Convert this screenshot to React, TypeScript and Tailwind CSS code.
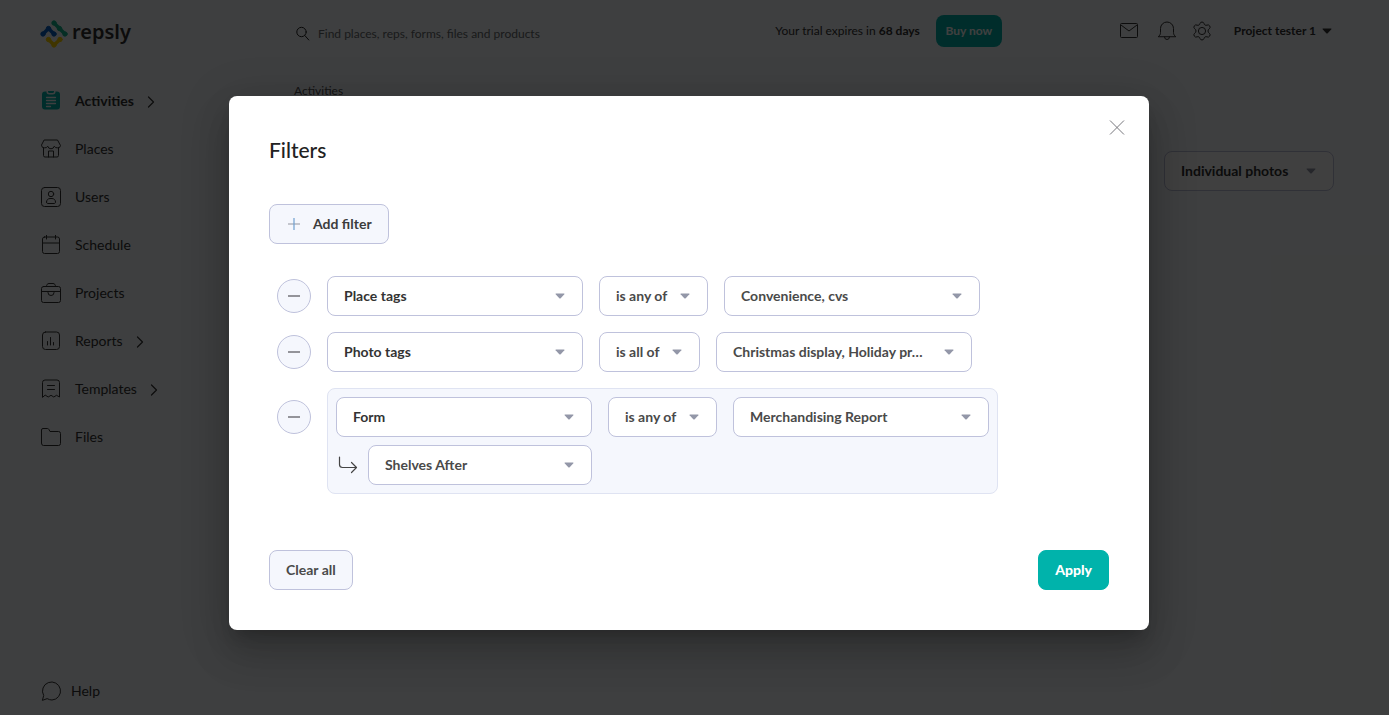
import type { ReactNode } from 'react';

interface NavEntry {
    label: string;
    icon: ReactNode;
    hasChildren?: boolean;
    active?: boolean;
}

/** Shared frame for the 20px line icons of the sidebar. */
function LineIcon({ children }: { children: ReactNode }) {
    return (
        <svg className="h-5 w-5 shrink-0" viewBox="0 0 20 20" fill="none" stroke="#333" strokeWidth="1" strokeLinecap="round" strokeLinejoin="round" aria-hidden="true">
            {children}
        </svg>
    );
}

const NAV_ENTRIES: NavEntry[] = [
    {
        label: 'Activities',
        active: true,
        hasChildren: true,
        icon: (
            <svg className="h-5 w-5 shrink-0" viewBox="0 0 20 20" fill="none" aria-hidden="true">
                <path d="M4 .5h1.500A2.800 2.800 0 008.300 3.500h3.400A2.800 2.800 0 0014.500.5H16a3 3 0 013 3v12a3 3 0 01-3 3H4a3 3 0 01-3-3v-12a3 3 0 013-3z" fill="#00b3ab" />
                <path d="M7 0h6v.5A1.500 1.500 0 0111.500 2h-3A1.500 1.500 0 017 .5z" fill="#00b3ab" />
                <path d="M5.500 6.500h9M5.500 9.500h9M5.500 12.500h9M5.500 15.500h4" stroke="#f7fafd" strokeWidth="1.300" strokeLinecap="round" />
            </svg>
        ),
    },
    {
        label: 'Places',
        icon: (
            <LineIcon>
                <path d="M3.500 1h13l3 5.500a2.600 2.600 0 01-3 2.300 3 3 0 01-3.200-1.600 3.400 3.400 0 01-6.600 0 3 3 0 01-3.200 1.600A2.600 2.600 0 01.5 6.500z" />
                <path d="M2.500 9v7.500A1.500 1.500 0 004 18h12a1.500 1.500 0 001.500-1.500V9M7.500 18v-6h5v6" />
            </LineIcon>
        ),
    },
    {
        label: 'Users',
        icon: (
            <LineIcon>
                <rect x=".5" y=".5" width="19" height="19" rx="3" />
                <circle cx="10" cy="7" r="2.700" />
                <path d="M5.500 15c0-2 1.500-3.500 3.500-3.500h2c2 0 3.500 1.500 3.500 3.500 0 1-.5 1.500-1.500 1.500H7c-1 0-1.500-.5-1.500-1.500z" />
            </LineIcon>
        ),
    },
    {
        label: 'Schedule',
        icon: (
            <LineIcon>
                <path d="M3.500 2h13a2 2 0 012 2v12.500a2 2 0 01-2 2h-13a2 2 0 01-2-2V4a2 2 0 012-2zM1.500 8h17M5.500 0v4M14.500 0v4" />
            </LineIcon>
        ),
    },
    {
        label: 'Projects',
        icon: (
            <LineIcon>
                <path d="M2.500 3.500h15a2 2 0 012 2v12a2 2 0 01-2 2h-15a2 2 0 01-2-2v-12a2 2 0 012-2zM.5 8.500h19M5.500 3.500c0-2 1-3 2.500-3h4c1.500 0 2.500 1 2.500 3M7 8.500v1a3 3 0 006 0v-1" />
            </LineIcon>
        ),
    },
    {
        label: 'Reports',
        hasChildren: true,
        icon: (
            <LineIcon>
                <rect x="1.500" y="1" width="17" height="17.500" rx="3" />
                <path d="M6.500 14v-3.500M9.500 14V6.500M12.500 14v-2.500" />
            </LineIcon>
        ),
    },
    {
        label: 'Templates',
        hasChildren: true,
        icon: (
            <LineIcon>
                <path d="M1.500 18V3.500A2.500 2.500 0 014 1h12a2.500 2.500 0 012.500 2.500V18l-3-1.700-2.700 1.700-2.800-1.700L7.200 18l-2.700-1.700zM6.500 6.500h7M6.500 10.500h7" />
            </LineIcon>
        ),
    },
    {
        label: 'Files',
        icon: (
            <LineIcon>
                <path d="M.5 16V3A1.500 1.500 0 012 1.500h4.500a1.500 1.500 0 011.300.8L9 4.500h8.500a2 2 0 012 2v10a2 2 0 01-2 2h-15a2 2 0 01-2-2z" />
            </LineIcon>
        ),
    },
];

function Logo() {
    return (
        <a href="#home" className="flex items-center gap-1">
            <svg className="h-7 w-7" viewBox="0 0 28 28" fill="none" strokeLinecap="round" strokeLinejoin="round" aria-hidden="true">
                <g stroke="#17b890" fill="#17b890">
                    <path d="M14 3l11 11" strokeWidth="3.500" />
                    <circle cx="14" cy="3" r="2.200" />
                    <circle cx="19.500" cy="8.500" r="2.200" />
                    <circle cx="25" cy="14" r="2.200" />
                </g>
                <g stroke="#0862c8">
                    <path d="M3 14l5.500-5.500L14 14" strokeWidth="3.500" />
                    <g fill="#0862c8">
                        <circle cx="3" cy="14" r="2.200" />
                        <circle cx="8.500" cy="8.500" r="2.200" />
                        <circle cx="14" cy="14" r="2.200" />
                    </g>
                </g>
                <g stroke="#ffd400">
                    <path d="M8.500 19.500l5.500 5.500 6-5.500" strokeWidth="3.500" />
                    <g fill="#ffd400">
                        <circle cx="8.500" cy="19.500" r="2.200" />
                        <circle cx="14" cy="25" r="2.200" />
                        <circle cx="20" cy="19.500" r="2.200" />
                    </g>
                </g>
            </svg>
            <span className="pb-1 font-['Noto_Sans',sans-serif] text-xl leading-6 font-semibold text-[#333]">repsly</span>
        </a>
    );
}

function Chevron() {
    return (
        <svg className="h-3 w-2" viewBox="0 0 8 12" fill="none" stroke="#333" strokeWidth="1.200" strokeLinecap="round" strokeLinejoin="round" aria-hidden="true">
            <path d="M1.500 1l5 5-5 5" />
        </svg>
    );
}

function Caret({ className }: { className: string }) {
    return (
        <svg className={className} viewBox="0 0 10 6" fill="currentColor" aria-hidden="true">
            <path d="M1 .5h8a.5.5 0 01.4.8L5.700 5.200a1 1 0 01-1.400 0L.6 1.300A.5.5 0 011 .5z" />
        </svg>
    );
}

interface SelectBoxProps {
    label: string;
    value: string;
    width?: string;
    tone?: string;
}

function SelectBox({ label, value, width = '', tone = 'text-[#333]' }: SelectBoxProps) {
    return (
        <div className={`relative ${width}`}>
            <select
                aria-label={label}
                className={`h-10 w-full appearance-none rounded-lg border border-[#bfc2dc] bg-white pr-[39px] pl-4 text-sm font-bold ${tone}`}
            >
                <option>{value}</option>
            </select>
            <Caret className="pointer-events-none absolute top-[17px] right-[18px] h-1.5 w-2.5 text-[#9397a8]" />
        </div>
    );
}

function RemoveButton({ label, className = '' }: { label: string; className?: string }) {
    return (
        <button
            type="button"
            aria-label={label}
            className={`flex h-[34px] w-[34px] shrink-0 items-center justify-center rounded-full border border-[#bfc2dc] bg-[#f5f7fd] ${className}`}
        >
            <svg className="h-3 w-3" viewBox="0 0 12 12" stroke="#94949a" strokeWidth="2" aria-hidden="true">
                <path d="M0 6h12" />
            </svg>
        </button>
    );
}

function Sidebar() {
    return (
        <aside className="flex w-[254px] shrink-0 flex-col pt-5 pb-3 pl-10">
            <Logo />
            <nav className="mt-[29px]">
                <ul>
                    {NAV_ENTRIES.map((entry) => (
                        <li key={entry.label}>
                            <a href={`#${entry.label.toLowerCase()}`} className="flex h-12 items-center pl-px text-sm text-[#333]">
                                {entry.icon}
                                <span className={entry.active ? 'ml-3.5 font-bold' : 'ml-3.5'}>{entry.label}</span>
                                {entry.hasChildren && (
                                    <span className="ml-[13px] pt-0.5">
                                        <Chevron />
                                    </span>
                                )}
                            </a>
                        </li>
                    ))}
                </ul>
            </nav>
            <a href="#help" className="mt-auto flex items-center gap-2.5 pl-px text-sm leading-6 text-[#333]">
                <LineIcon>
                    <path d="M1.500 19l1.200-4.500A9 9 0 1111 19a9 9 0 01-4.500-1.200z" />
                </LineIcon>
                Help
            </a>
        </aside>
    );
}

function TopBar() {
    return (
        <header className="flex h-[62px] items-center pr-0.5">
            <label className="mt-1.5 flex grow items-center gap-2">
                <svg className="h-4 w-4 shrink-0" viewBox="0 0 16 16" fill="none" stroke="#222" strokeWidth="1" strokeLinecap="round" aria-hidden="true">
                    <circle cx="7.500" cy="6" r="4.700" />
                    <path d="M10.800 9.500l4 4.500" />
                </svg>
                <input
                    type="search"
                    aria-label="Search"
                    placeholder="Find places, reps, forms, files and products"
                    className="w-72 bg-transparent text-xs placeholder:text-[#666a6e]"
                />
            </label>
            <p className="text-xs text-[#333]">
                Your trial expires in <strong>68 days</strong>
            </p>
            <button type="button" className="ml-4 h-8 w-[66px] rounded-lg bg-[#00b3ab] text-xs font-bold text-white">
                Buy now
            </button>
            <div className="ml-[117px] flex items-center">
                <button type="button" aria-label="Messages">
                    <svg className="h-5 w-5" viewBox="0 0 20 20" fill="none" stroke="#333" strokeWidth="1" strokeLinejoin="round" aria-hidden="true">
                        <rect x="1.500" y="2.500" width="17" height="14" rx="1" />
                        <path d="M2 4l8 6 8-6" />
                    </svg>
                </button>
                <button type="button" aria-label="Notifications" className="ml-[18px]">
                    <svg className="h-5 w-5" viewBox="0 0 20 20" fill="none" stroke="#333" strokeWidth="1" strokeLinecap="round" strokeLinejoin="round" aria-hidden="true">
                        <path d="M1.500 15.500c1.300-1 2-2.200 2-4V7.500a6.500 6.500 0 0113 0v4c0 1.800.7 3 2 4zM7.500 16a2.500 2.500 0 005 0" />
                    </svg>
                </button>
                <button type="button" aria-label="Settings" className="ml-[15px]">
                    <svg className="h-5 w-5" viewBox="0 0 20 20" fill="none" stroke="#333" strokeWidth="1" strokeLinejoin="round" aria-hidden="true">
                        <circle cx="10" cy="10" r="3.600" />
                        <path d="M8 2.500a2.100 2.100 0 014 0 2.100 2.100 0 003 1.600 2.200 2.200 0 012.400 3.600 2.600 2.600 0 000 4.600 2.200 2.200 0 01-2.400 3.600 2.100 2.100 0 00-3 1.600 2.100 2.100 0 01-4 0 2.100 2.100 0 00-3-1.600 2.200 2.200 0 01-2.400-3.600 2.600 2.600 0 000-4.600A2.200 2.200 0 015 4.100a2.100 2.100 0 003-1.600z" />
                    </svg>
                </button>
                <button type="button" className="ml-[22px] flex items-center gap-1.5 text-xs font-bold text-[#333]">
                    Project tester 1
                    <Caret className="h-1.5 w-2.5" />
                </button>
            </div>
        </header>
    );
}

function FiltersDialog() {
    return (
        <div
            role="dialog"
            aria-modal="true"
            aria-labelledby="filters-title"
            className="relative w-full max-w-[920px] rounded-lg bg-white p-10 shadow-[0_11px_15px_-7px_rgba(0,0,0,0.2),0_24px_38px_3px_rgba(0,0,0,0.14),0_9px_46px_8px_rgba(0,0,0,0.12)]"
        >
            <button type="button" aria-label="Close" className="absolute top-5 right-5 flex h-6 w-6 items-center justify-center">
                <svg className="h-4 w-4" viewBox="0 0 16 16" stroke="#77777c" strokeWidth="1" aria-hidden="true">
                    <path d="M1 .5l14 14M15 .5l-14 14" />
                </svg>
            </button>

            <h2 id="filters-title" className="text-[21px] leading-7 font-medium text-[#222]">Filters</h2>

            <button
                type="button"
                className="mt-10 flex h-10 items-center rounded-lg border border-[#bfc2dc] bg-[#f5f7fd] px-4 text-sm font-bold text-[#3c3c3c]"
            >
                <svg className="mr-[13px] ml-0.5 h-3 w-3" viewBox="0 0 12 12" strokeWidth="1.200" aria-hidden="true">
                    <path d="M0 6h12" stroke="#a3a6b0" />
                    <path d="M6 0v12" stroke="#6f9fd0" />
                </svg>
                Add filter
            </button>

            {/* Filter rows */}
            <div className="mt-8 flex flex-col gap-4 pl-2">
                <div className="flex items-center gap-4">
                    <RemoveButton label="Remove place tags filter" />
                    <SelectBox label="Filter type" value="Place tags" width="w-64" />
                    <SelectBox label="Condition" value="is any of" tone="text-[#4a4a4a]" />
                    <SelectBox label="Values" value="Convenience, cvs" width="w-64" tone="text-[#4a4a4a]" />
                </div>
                <div className="flex items-center gap-4">
                    <RemoveButton label="Remove photo tags filter" />
                    <SelectBox label="Filter type" value="Photo tags" width="w-64" />
                    <SelectBox label="Condition" value="is all of" tone="text-[#4a4a4a]" />
                    <SelectBox label="Values" value="Christmas display, Holiday pr…" width="w-64" tone="text-[#4a4a4a]" />
                </div>
                <div className="flex items-start gap-4">
                    <RemoveButton label="Remove form filter" className="mt-3" />
                    <div className="rounded-lg border border-[#dfe3f2] bg-[#f5f7fd] p-2">
                        <div className="flex gap-4">
                            <SelectBox label="Filter type" value="Form" width="w-64" />
                            <SelectBox label="Condition" value="is any of" tone="text-[#4a4a4a]" />
                            <SelectBox label="Values" value="Merchandising Report" width="w-64" tone="text-[#4a4a4a]" />
                        </div>
                        <div className="mt-2 flex items-center gap-2">
                            <svg className="h-6 w-6" viewBox="0 0 24 24" fill="none" stroke="#444" strokeWidth="1.200" strokeLinecap="round" strokeLinejoin="round" aria-hidden="true">
                                <path d="M3.500 4v7.500a3 3 0 003 3H20.500M15.500 9.500l5 5-5 5" />
                            </svg>
                            <SelectBox label="Form question" value="Shelves After" width="w-56" tone="text-[#4a4a4a]" />
                        </div>
                    </div>
                </div>
            </div>

            <div className="mt-14 flex justify-between">
                <button type="button" className="h-10 rounded-lg border border-[#bfc2dc] bg-[#f5f7fd] px-4 text-sm font-bold text-[#4a4a4a]">
                    Clear all
                </button>
                <button type="button" className="h-10 rounded-lg border border-[#00b3ab] bg-[#00b3ab] px-4 text-sm font-black text-white">
                    Apply
                </button>
            </div>
        </div>
    );
}

export default function App() {
    return (
        <div className="relative flex min-h-screen bg-[#f7fafd] font-['Lato',sans-serif]">
            <Sidebar />
            <main className="min-w-0 grow pr-[55px] pl-10">
                <TopBar />
                <p className="mt-5 text-xs leading-[18px] text-[#555]">Activities</p>
                <div className="mt-[51px] flex justify-end">
                    <SelectBox label="Photo grouping" value="Individual photos" width="w-[170px]" />
                </div>
            </main>

            {/* Modal layer */}
            <div className="absolute inset-0 flex items-start justify-center bg-black/75 pt-24 pr-[11px]">
                <FiltersDialog />
            </div>
        </div>
    );
}
